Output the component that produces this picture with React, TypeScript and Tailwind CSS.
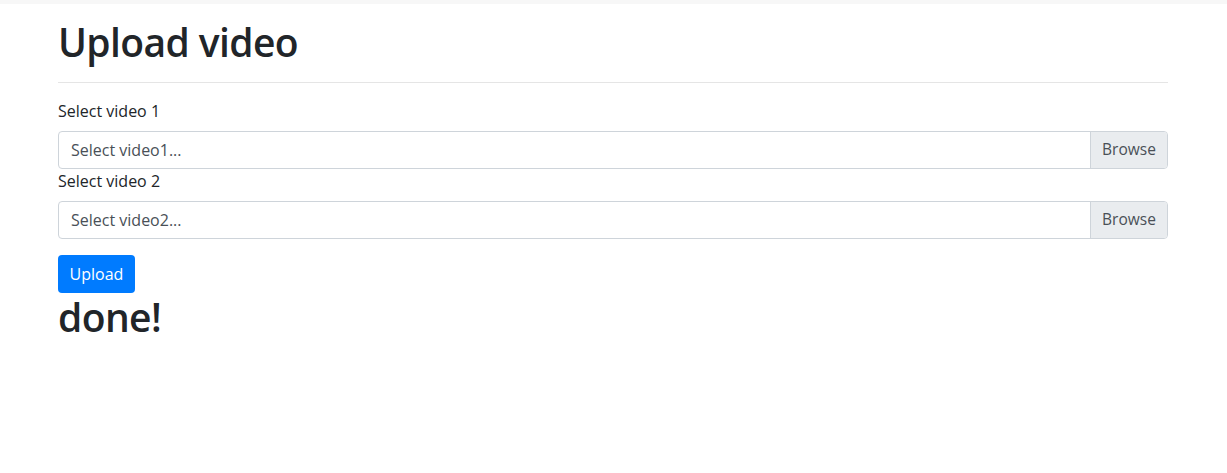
const font = { fontFamily: '"Open Sans", "Noto Sans", sans-serif' };

function FileField({ id, label, placeholder }: { id: string; label: string; placeholder: string }) {
  return (
    <div>
      <label htmlFor={id} className="block mb-2 text-base leading-6 text-[#212529]">
        {label}
      </label>
      <div className="flex h-[38px] border border-[#ced4da] rounded-[4px] overflow-hidden">
        <div className="flex-1 flex items-center px-3 text-base text-[#495057]">{placeholder}</div>
        <div className="flex items-center justify-center w-[77px] bg-[#e9ecef] border-l border-[#ced4da] text-[15.5px] text-[#495057]">
          Browse
        </div>
      </div>
    </div>
  );
}

export default function App() {
  return (
    <div className="min-h-[473px] bg-white" style={font}>
      <div className="h-[4px] bg-[#f7f7f7]" />
      <div className="w-[1111px] mx-auto pr-px">
        <h1 className="mt-[14px] text-[39px] leading-[48px] font-semibold tracking-[-0.6px] text-[#212529]">
          Upload video
        </h1>
        <hr className="my-4 border-t border-[#e5e5e5]" />
        <FileField id="v1" label="Select video 1" placeholder="Select video1..." />
        <FileField id="v2" label="Select video 2" placeholder="Select video2..." />
        <button className="mt-4 h-[38px] w-[77px] rounded-[4px] bg-[#007bff] text-white text-base">Upload</button>
        <h1 className="text-[39px] leading-[48px] font-semibold tracking-[-0.6px] text-[#212529]">done!</h1>
      </div>
    </div>
  );
}
